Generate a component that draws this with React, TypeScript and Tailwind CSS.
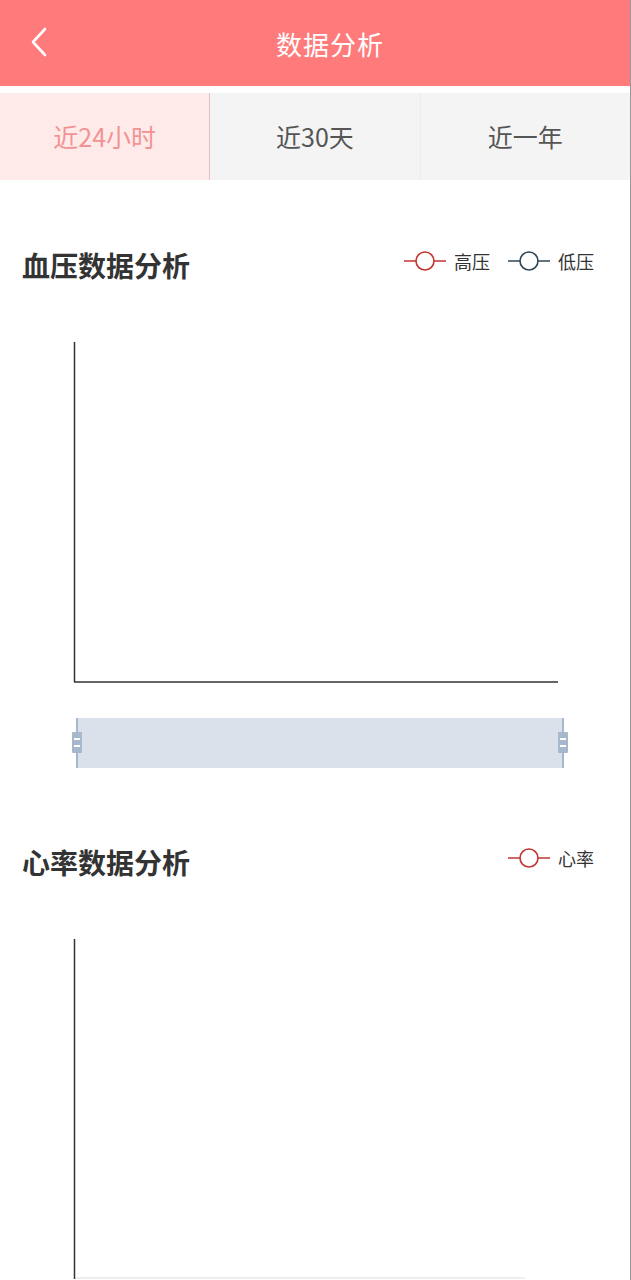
import { useState } from 'react'

const TABS = ['近24小时', '近30天', '近一年']

function LegendIcon({ color }: { color: string }) {
  return (
    <svg width="42" height="22" viewBox="0 0 42 22">
      <line x1="0" y1="11" x2="42" y2="11" stroke={color} strokeWidth="1.6" />
      <circle cx="21" cy="11" r="9" fill="#fff" stroke={color} strokeWidth="1.6" />
    </svg>
  )
}

function Legend({ items }: { items: { name: string; color: string }[] }) {
  return (
    <div className="flex items-center gap-[18px] mt-[-8px]">
      {items.map(it => (
        <div key={it.name} className="flex items-center gap-[8px]">
          <LegendIcon color={it.color} />
          <span className="text-[18px] text-[#333] leading-none">{it.name}</span>
        </div>
      ))}
    </div>
  )
}

function Axes({ height, zoom }: { height: number; zoom?: boolean }) {
  return (
    <svg width="630" height={height} viewBox={`0 0 630 ${height}`} className="block">
      <line x1="74.5" y1="42" x2="74.5" y2="382" stroke="#333" strokeWidth="1.5" />
      {zoom ? (
        <line x1="74" y1="382" x2="558" y2="382" stroke="#333" strokeWidth="1.5" />
      ) : (
        <line x1="76" y1="381" x2="525" y2="381" stroke="#e8e8e8" strokeWidth="1.5" />
      )}
      {zoom && (
        <g>
          <rect x="77" y="418" width="486" height="50" fill="#dbe1eb" />
          <line x1="77" y1="418" x2="77" y2="468" stroke="#a7b7cc" strokeWidth="2" />
          <line x1="563" y1="418" x2="563" y2="468" stroke="#a7b7cc" strokeWidth="2" />
          <rect x="72" y="432" width="10" height="21" rx="1" fill="#a7b7cc" />
          <rect x="558" y="432" width="10" height="21" rx="1" fill="#a7b7cc" />
          <rect x="74" y="438" width="6" height="2" fill="#fff" />
          <rect x="74" y="445" width="6" height="2" fill="#fff" />
          <rect x="560" y="438" width="6" height="2" fill="#fff" />
          <rect x="560" y="445" width="6" height="2" fill="#fff" />
        </g>
      )}
    </svg>
  )
}

export default function App() {
  const [tab, setTab] = useState(0)

  return (
    <div
      className="w-[631px] h-[1280px] overflow-hidden bg-white border-r border-black/40"
      style={{ fontFamily: '"Noto Sans CJK SC", "Noto Sans", sans-serif' }}
    >
      <div className="h-[86px] bg-[#ff7b7b] flex items-center relative">
        <svg width="20" height="32" viewBox="0 0 20 32" className="absolute left-[29px] top-[26px]">
          <path d="M16 3 L4 16 L16 29" fill="none" stroke="#fff" strokeWidth="2.6" strokeLinecap="round" strokeLinejoin="round" />
        </svg>
        <div className="flex-1 text-center pl-[30px] text-white text-[26px] tracking-[1px]">数据分析</div>
      </div>

      <div className="h-[7px]" />

      <div className="flex h-[87px]">
        {TABS.map((t, i) => (
          <button
            key={t}
            onClick={() => setTab(i)}
            className={
              'flex-1 flex items-center justify-center text-[25px] ' +
              (i === 0 ? 'border-r border-[#dcc4c4] ' : i === 1 ? 'border-r border-[#ebebeb] ' : '') +
              (tab === i ? 'bg-[#ffeaea] text-[#f29393]' : 'bg-[#f4f4f4] text-[#555]')
            }
          >
            {t}
          </button>
        ))}
      </div>

      <div className="h-[50px]" />
      <div className="h-[70px] flex items-center justify-between pl-[22px] pr-[36px]">
        <h2 className="text-[28px] font-bold text-[#333]">血压数据分析</h2>
        <Legend items={[{ name: '高压', color: '#c23531' }, { name: '低压', color: '#2f4554' }]} />
      </div>
      <Axes height={527} zoom />

      <div className="h-[70px] flex items-center justify-between pl-[22px] pr-[36px]">
        <h2 className="text-[28px] font-bold text-[#333]">心率数据分析</h2>
        <Legend items={[{ name: '心率', color: '#c23531' }]} />
      </div>
      <Axes height={400} />
    </div>
  )
}
